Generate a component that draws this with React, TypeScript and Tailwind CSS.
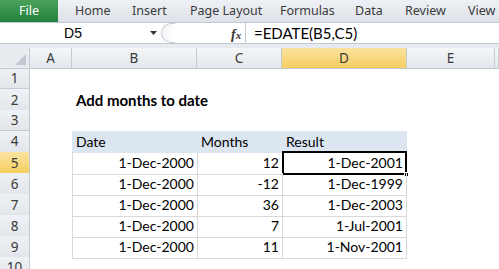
const tabs = ["Home", "Insert", "Page Layout", "Formulas", "Data", "Review", "View"];
const tabX = [75, 132, 190, 280, 355, 405, 468];

const rows = [
  { b: "1-Dec-2000", c: "12", d: "1-Dec-2001" },
  { b: "1-Dec-2000", c: "-12", d: "1-Dec-1999" },
  { b: "1-Dec-2000", c: "36", d: "1-Dec-2003" },
  { b: "1-Dec-2000", c: "7", d: "1-Jul-2001" },
  { b: "1-Dec-2000", c: "11", d: "1-Nov-2001" },
];

const gridCols = "grid grid-cols-[30px_42px_125px_85px_125px_88px_1fr]";
const cellFont = "font-['Lato','Liberation_Sans',sans-serif] text-[14px] text-black";
const uiFont = "font-['Noto_Sans','Liberation_Sans',sans-serif]";

function RowHead({ n, active }: { n: number; active?: boolean }) {
  return (
    <div
      className={`flex items-center justify-center border-r border-b border-[#c5cbd3] text-[13.5px] text-[#3a3a3a] ${uiFont} ${
        active ? "bg-gradient-to-b from-[#fbe3a0] to-[#f6cd5c]" : "bg-gradient-to-b from-[#eef1f5] to-[#e2e6eb]"
      }`}
    >
      {n}
    </div>
  );
}

export default function App() {
  return (
    <div className="w-[499px] h-[269px] overflow-hidden bg-white relative">
      {/* ribbon tabs */}
      <div className={`relative h-[22px] bg-gradient-to-b from-[#eef1f5] to-[#dde2e8] ${uiFont} text-[12.5px] text-[#3b3b3b]`}>
        <div className="absolute left-0 top-0 w-[58px] h-[22px] bg-gradient-to-b from-[#4aa35a] to-[#22803a] text-white flex items-center justify-center">
          File
        </div>
        {tabs.map((t, i) => (
          <span key={t} className="absolute top-[2px] leading-[18px]" style={{ left: tabX[i] }}>
            {t}
          </span>
        ))}
      </div>

      {/* formula bar */}
      <div className="h-[22px] flex bg-white border-y border-[#c3c9d1]">
        <div className="w-[146px] flex items-center justify-center text-[14px] text-black font-['Liberation_Sans',sans-serif]">
          D5
        </div>
        <div className="w-[14px] flex items-center justify-center">
          <svg width="7" height="4" viewBox="0 0 7 4">
            <path d="M0 0h7L3.5 4z" fill="#333" />
          </svg>
        </div>
        <div className="w-[85px] flex items-center relative">
          <div className="ml-[1px] w-[14px] h-[20px] rounded-l-full border border-[#c8cdd3] border-r-0 bg-gradient-to-r from-[#f2f4f6] to-white" />
          <span className="absolute left-[71px] top-[1px] font-['Liberation_Serif',serif] italic font-bold text-[14px] text-[#333]">
            f<span className="text-[11px]">x</span>
          </span>
        </div>
        <div className="flex-1 border-l border-[#c3c9d1] pl-[8px] flex items-center text-[15px] text-black font-['Lato',sans-serif]">
          =EDATE(B5,C5)
        </div>
      </div>
      <div className="h-[4px] bg-[#e7eaee]" />

      {/* column headers */}
      <div className={`${gridCols} h-[20px] ${uiFont} text-[13.5px] text-[#3a3a3a]`}>
        <div className="border-r border-b border-[#c5cbd3] bg-[#e8ebef] relative overflow-hidden">
          <svg className="absolute right-[3px] bottom-[3px]" width="11" height="11" viewBox="0 0 11 11">
            <path d="M11 0v11H0z" fill="#c4c9cf" />
          </svg>
        </div>
        {["A", "B", "C", "D", "E", "F"].map((c) => (
          <div
            key={c}
            className={`flex items-center justify-center border-r border-b border-[#c5cbd3] ${
              c === "D" ? "bg-gradient-to-b from-[#fbe3a0] to-[#f6cd5c]" : "bg-gradient-to-b from-[#f4f6f8] to-[#e3e7ec]"
            }`}
          >
            {c === "F" ? "" : c}
          </div>
        ))}
      </div>

      {/* row 1 */}
      <div className={`${gridCols} h-[21px]`}>
        <RowHead n={1} />
      </div>
      {/* row 2 */}
      <div className={`${gridCols} h-[21px]`}>
        <RowHead n={2} />
        <div />
        <div className="col-span-3 pl-[4px] flex items-end pb-[1px] font-bold font-['Lato','Liberation_Sans',sans-serif] text-[15px] text-black">
          Add months to date
        </div>
      </div>
      {/* row 3 */}
      <div className={`${gridCols} h-[21px]`}>
        <RowHead n={3} />
      </div>
      {/* row 4 header */}
      <div className={`${gridCols} h-[21px] ${cellFont}`}>
        <RowHead n={4} />
        <div />
        <div className="bg-[#dce6f1] pl-[4px] flex items-end pb-[1px]">Date</div>
        <div className="bg-[#dce6f1] pl-[4px] flex items-end pb-[1px]">Months</div>
        <div className="bg-[#dce6f1] pl-[4px] flex items-end pb-[1px]">Result</div>
      </div>
      {rows.map((r, i) => (
        <div key={i} className={`${gridCols} h-[21px] ${cellFont}`}>
          <RowHead n={5 + i} active={i === 0} />
          <div />
          <div className="border-l border-b border-[#d9d9d9] pr-[3px] flex items-end justify-end pb-[1px]">{r.b}</div>
          <div className="border-l border-b border-[#d9d9d9] pr-[3px] flex items-end justify-end pb-[1px]">{r.c}</div>
          <div className="relative border-x border-b border-[#d9d9d9] pr-[3px] flex items-end justify-end pb-[1px]">
            {r.d}
            {i === 0 && (
              <div className="absolute -left-[1px] -top-[1px] -right-[1px] -bottom-[1px] border-2 border-black">
                <div className="absolute -right-[4px] -bottom-[4px] w-[5px] h-[5px] bg-black border border-white" />
              </div>
            )}
          </div>
        </div>
      ))}
      <div className={`${gridCols} h-[21px]`}>
        <RowHead n={10} />
      </div>
    </div>
  );
}
